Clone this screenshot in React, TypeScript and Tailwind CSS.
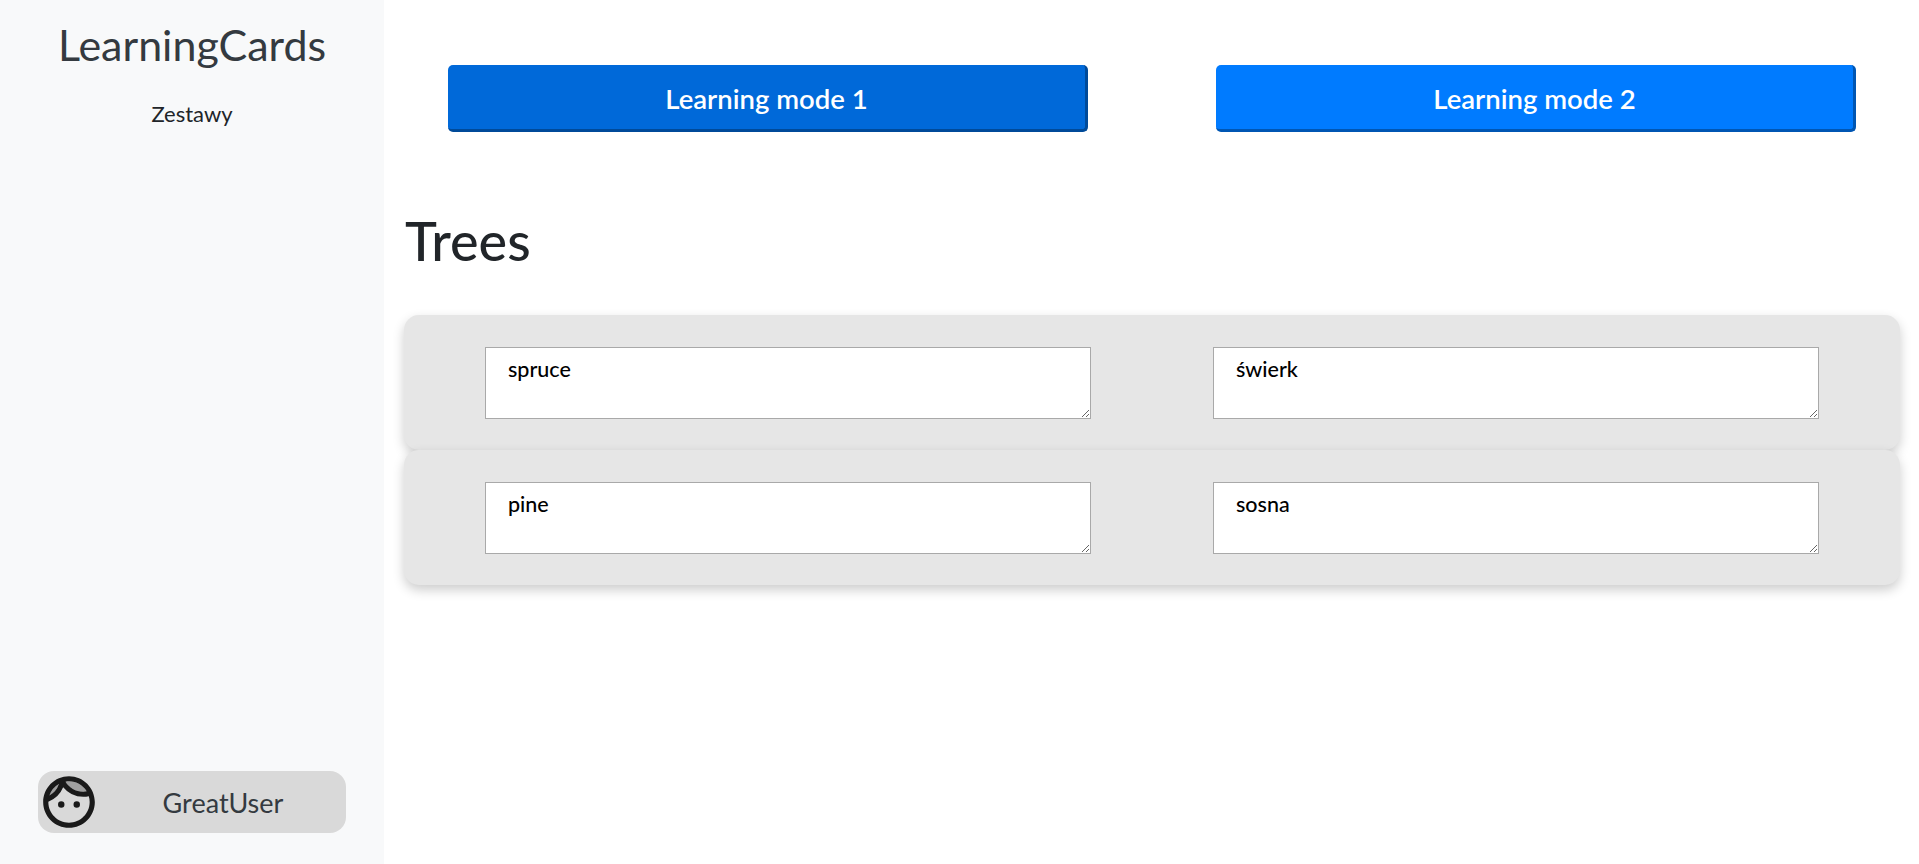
const words = [
  { en: "spruce", pl: "świerk" },
  { en: "pine", pl: "sosna" },
];

function FaceIcon() {
  return (
    <svg viewBox="0 0 24 24" className="h-[62px] w-[62px] shrink-0" fill="#1a1a1a">
      <path
        opacity=".3"
        d="M17.5 8c.46 0 .91-.05 1.34-.12C17.44 5.56 14.9 4 12 4c-.46 0-.91.05-1.34.12C12.06 6.44 14.6 8 17.5 8zM8.08 5.03C6.37 6 5.05 7.58 4.42 9.47c1.71-.97 3.03-2.55 3.66-4.44z"
      />
      <path d="M10.25 13a1.25 1.25 0 1 1-2.5 0 1.25 1.25 0 0 1 2.5 0zM15 11.75a1.25 1.25 0 1 0 0 2.5 1.25 1.25 0 0 0 0-2.5zm7 .25c0 5.52-4.48 10-10 10S2 17.52 2 12 6.48 2 12 2s10 4.48 10 10zM10.66 4.12C12.06 6.44 14.6 8 17.5 8c.46 0 .91-.05 1.34-.12C17.44 5.56 14.9 4 12 4c-.46 0-.91.05-1.34.12zM4.42 9.47a8.046 8.046 0 0 0 3.66-4.44 8.046 8.046 0 0 0-3.66 4.44zM20 12c0-.78-.12-1.53-.33-2.24-.7.15-1.42.24-2.17.24a10 10 0 0 1-7.76-3.69A10.016 10.016 0 0 1 4 11.86c.01.04 0 .09 0 .14 0 4.41 3.59 8 8 8s8-3.59 8-8z" />
    </svg>
  );
}

function WordField({ value }: { value: string }) {
  return (
    <textarea
      defaultValue={value}
      className="h-[72px] w-[606px] border border-[#a9a9a9] bg-white pl-[22px] pt-[6px] text-[21.5px] leading-[30px] font-medium text-black"
    />
  );
}

export default function App() {
  return (
    <div className="flex h-[864px] bg-white font-['Lato',sans-serif]">
      {/* Sidebar */}
      <aside className="flex w-[384px] shrink-0 flex-col items-center bg-[#f8f9fa] pt-[19px] pb-[31px]">
        <h1 className="text-[43px] leading-[52px] text-[#343a40]">LearningCards</h1>
        <a href="#zestawy" className="mt-[27px] text-[22px] leading-[32px] text-[#212529]">
          Zestawy
        </a>
        <div className="mt-auto flex h-[62px] w-[308px] items-center rounded-[16px] bg-[#d9d9d9]">
          <FaceIcon />
          <span className="flex-1 pt-[2px] text-center text-[27px] text-[#343a40]">GreatUser</span>
        </div>
      </aside>

      {/* Main */}
      <main className="min-w-0 flex-1">
        <div className="mt-[65px] grid grid-cols-2 gap-32 pr-[63px] pl-16">
          <button className="h-[67px] rounded-[5px] border-r-[3px] border-b-[3px] border-[#004a99] bg-[#0069d9] pt-[4px] text-[27.5px] font-semibold text-white">
            Learning mode 1
          </button>
          <button className="h-[67px] rounded-[5px] border-r-[3px] border-b-[3px] border-[#0056b3] bg-[#007bff] pt-[4px] text-[27.5px] font-semibold text-white">
            Learning mode 2
          </button>
        </div>

        <h2 className="mt-[75px] ml-[21px] text-[54px] leading-[67px] font-medium text-[#212529]">Trees</h2>

        <div className="mt-[41px] mr-[19px] ml-[20px]">
          {words.map((w) => (
            <div
              key={w.en}
              className="grid h-[135px] grid-cols-2 justify-items-center rounded-[15px] bg-[#e6e6e6] px-5 pt-[32px] shadow-[0_5px_12px_rgba(0,0,0,0.2)]"
            >
              <WordField value={w.en} />
              <WordField value={w.pl} />
            </div>
          ))}
        </div>
      </main>
    </div>
  );
}
